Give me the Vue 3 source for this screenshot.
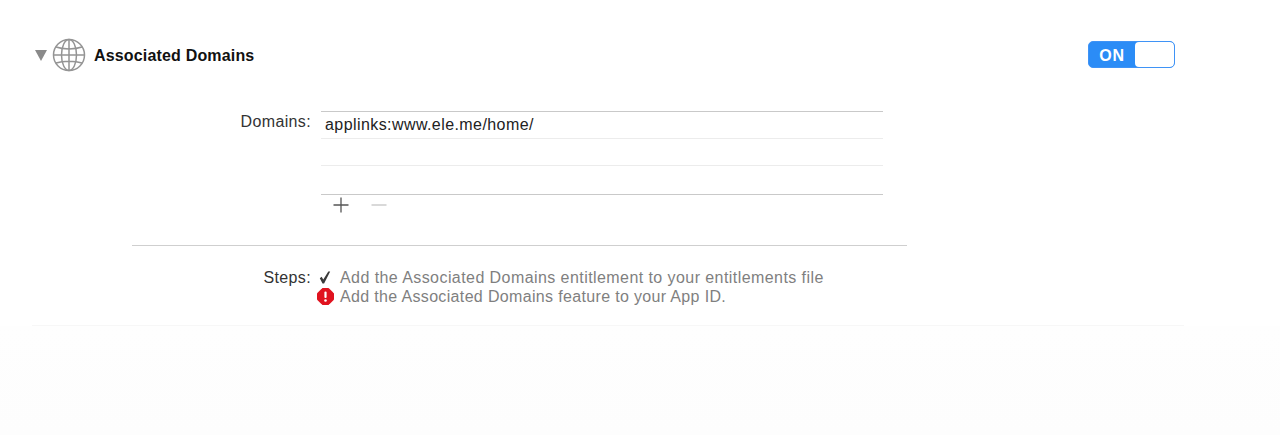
<template>
  <div class="page">
    <section class="capability">
      <div class="cap-header">
        <span class="disclosure"></span>
        <svg class="globe" width="34" height="34" viewBox="0 0 34 34" fill="none" stroke="#949494" stroke-width="1.5">
          <circle cx="17" cy="17" r="15.5" />
          <ellipse cx="17" cy="17" rx="7.5" ry="15.5" />
          <path d="M17 1.5V32.5M1.5 17H32.5M4 9C11 11.5 23 11.5 30 9M4 25C11 22.5 23 22.5 30 25" />
        </svg>
        <h2 class="cap-title">Associated Domains</h2>
        <div class="toggle">
          <span class="toggle-on">ON</span>
          <span class="toggle-knob"></span>
        </div>
      </div>

      <div class="domains-row">
        <span class="row-label">Domains:</span>
        <div class="domains-box">
          <div class="domain-list">
            <div v-for="(d, i) in domains" :key="i" class="domain-item">{{ d }}</div>
          </div>
          <div class="list-actions">
            <svg width="16" height="16" viewBox="0 0 16 16" stroke="#555" stroke-width="1.3"><path d="M8 0.5V15.5M0.5 8H15.5" /></svg>
            <svg width="16" height="16" viewBox="0 0 16 16" stroke="#c4c4c4" stroke-width="1.3"><path d="M0.5 8H15.5" /></svg>
          </div>
        </div>
      </div>

      <div class="divider"></div>

      <div class="steps-row">
        <span class="row-label">Steps:</span>
        <div class="steps">
          <div class="step">
            <span class="step-icon">
              <svg width="12" height="13" viewBox="0 0 12 13" fill="#3a3a3a"><path d="M0.8 7.2L2.6 5.8L4.3 8.6L9.3 0.5L11.2 0.5L5.1 12.5L3.5 12.5Z" /></svg>
            </span>
            <span>Add the Associated Domains entitlement to your entitlements file</span>
          </div>
          <div class="step">
            <span class="step-icon">
              <svg width="17" height="17" viewBox="0 0 17 17"><path d="M5.3 0.5H11.7L16.5 5.3V11.7L11.7 16.5H5.3L0.5 11.7V5.3Z" fill="#e0131f" stroke="#e0131f" stroke-linejoin="round" /><rect x="7.4" y="3.4" width="2.2" height="6.6" rx="1" fill="#fff" /><circle cx="8.5" cy="12.5" r="1.3" fill="#fff" /></svg>
            </span>
            <span class="step-second">Add the Associated Domains feature to your App ID.</span>
          </div>
        </div>
      </div>
    </section>
  </div>
</template>

<script setup>
const domains = ['applinks:www.ele.me/home/', '', '']
</script>

<style>
html, body { background: #fefefe; }
</style>

<style scoped>
.page {
  height: 435px;
  background: linear-gradient(#ffffff 326px, #fefefe 326px, #fdfdfd);
  font-family: "Liberation Sans", Arial, sans-serif;
  box-sizing: border-box;
  overflow: hidden;
}

.capability {
  height: 326px;
  width: 1152px;
  margin-left: 32px;
  box-sizing: border-box;
  padding-top: 38px;
  border-bottom: 1px solid #f7f7f7;
}

.cap-header {
  display: flex;
  align-items: center;
  height: 34px;
}

.disclosure {
  width: 0;
  height: 0;
  margin: 0 5px 0 3px;
  border-left: 6.5px solid transparent;
  border-right: 6.5px solid transparent;
  border-top: 11px solid #8a8a8a;
}

.cap-title {
  margin: 2px 0 0 8px;
  font-size: 16px;
  font-weight: 700;
  letter-spacing: 0.17px;
  color: #111;
}

.toggle {
  display: flex;
  width: 87px;
  height: 27px;
  margin: 0 9px 2px auto;
  box-sizing: border-box;
  border: 1.5px solid #3f93f6;
  border-radius: 5px;
  overflow: hidden;
  background: #2b8cf6;
}

.toggle-on {
  width: 46px;
  color: #fff;
  font-size: 16px;
  font-weight: 700;
  letter-spacing: 0.8px;
  line-height: 27px;
  text-align: center;
}

.toggle-knob {
  flex: 1;
  background: #fff;
  border-radius: 4px;
}

.domains-row {
  display: flex;
  margin-top: 39px;
}

.row-label {
  width: 279px;
  text-align: right;
  font-size: 16px;
  letter-spacing: 0.36px;
  color: #333;
  flex-shrink: 0;
}

.domains-row .row-label { line-height: 21px; }

.domains-box {
  width: 562px;
  margin-left: 10px;
}

.domain-list {
  border-top: 1px solid #c9c9c9;
  border-bottom: 1px solid #c9c9c9;
}

.domain-item {
  height: 27px;
  box-sizing: border-box;
  padding-left: 4px;
  font-size: 16px;
  letter-spacing: 0.42px;
  line-height: 25px;
  color: #222;
  border-bottom: 1px solid #ececec;
}

.domain-item:last-child {
  height: 28px;
  border-bottom: none;
}

.list-actions {
  display: flex;
  gap: 22px;
  padding: 2px 0 0 12px;
}

.divider {
  width: 775px;
  height: 1px;
  margin: 32px 0 0 100px;
  background: #cfcfcf;
}

.steps-row {
  display: flex;
  margin-top: 22px;
}

.steps-row .row-label { line-height: 20px; }

.steps {
  margin-left: 5px;
  font-size: 16px;
  letter-spacing: 0.43px;
  color: #7f7f7f;
}

.step {
  display: flex;
  align-items: center;
  height: 19px;
}

.step-second { letter-spacing: 0.34px; }

.step-icon {
  display: flex;
  justify-content: center;
  align-items: center;
  width: 18px;
  margin-right: 6px;
}
</style>
